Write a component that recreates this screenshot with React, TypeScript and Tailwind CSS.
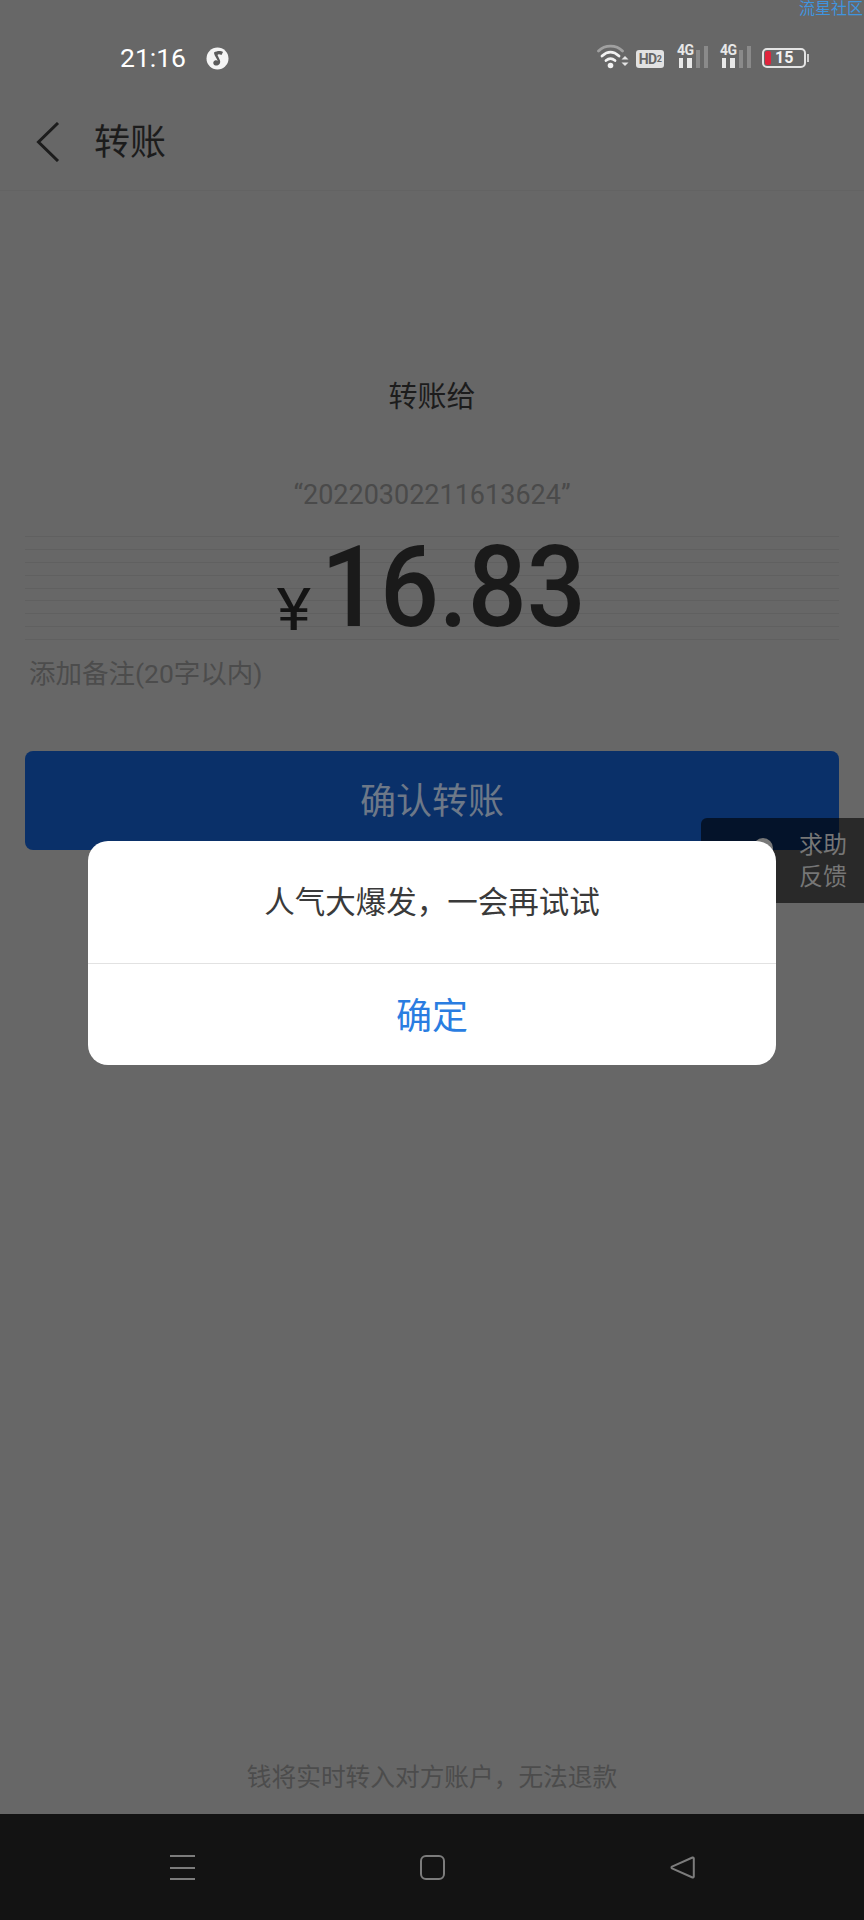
const RULE_KEYS = [0, 1, 2, 3, 4, 5, 6, 7, 8];

function WifiIcon() {
  return (
    <svg width="32" height="25" viewBox="0 0 32 25" fill="none" strokeLinecap="round">
      <path d="M1.5 7C8 0.5 19 0.5 25.5 7" stroke="#a0a0a0" strokeWidth="2.8" />
      <path d="M5 12C10.5 7 16.5 7 22 12" stroke="#f2f2f2" strokeWidth="2.8" />
      <path d="M9 16.5C12 14 15 14 18 16.5" stroke="#f2f2f2" strokeWidth="2.8" />
      <circle cx="13.5" cy="21.5" r="2.8" fill="#f2f2f2" />
      <path d="M24.5 15.5L28 12L31.5 15.5Z" fill="#e4e4e4" />
      <path d="M24.5 18.5L28 22L31.5 18.5Z" fill="#e4e4e4" />
    </svg>
  );
}

function CellIcon() {
  return (
    <div className="relative h-[24px] w-[31px]">
      <span className="absolute left-0 top-[-2px] text-[14px] font-bold leading-[16px] tracking-[-0.5px] text-[#e8e8e8]">4G</span>
      <div className="absolute bottom-0 left-[2px] h-[10px] w-[4px] bg-[#e8e8e8]" />
      <div className="absolute bottom-0 left-[10px] h-[10px] w-[5px] bg-[#e8e8e8]" />
      <div className="absolute bottom-0 left-[19px] h-[18px] w-[4px] bg-[#8a8a8a]" />
      <div className="absolute bottom-0 left-[27px] h-[22px] w-[4px] bg-[#8a8a8a]" />
    </div>
  );
}

function StatusBar() {
  return (
    <div className="flex h-[96px] shrink-0 items-start pt-[44px]">
      <span className="ml-[120px] text-[26.5px] leading-[28px] text-white">21:16</span>
      <svg className="ml-[20px] mt-[3px]" width="23" height="23" viewBox="0 0 23 23">
        <circle cx="11.5" cy="11.5" r="11" fill="#f4f4f4" />
        <path d="M8 5.5C11 3.5 15 3.5 17 5L15.5 8C13.5 7 12 7 11.5 8L14 13.5C15 17 12 19 9.5 18.5C7 18 6.5 15 8.5 13.8C9.8 13 11 13.2 11.8 13.8L8.8 8.5C8.2 7.3 8 6.3 8 5.5Z" fill="#5c5c5c" />
      </svg>
      <div className="ml-auto mr-[58px] flex items-start">
        <WifiIcon />
        <div className="ml-[7px] mt-[6px] flex h-[18px] w-[28px] items-center justify-center rounded-[3px] bg-[#e2e2e2] text-[14px] font-bold leading-none tracking-[-0.5px] text-[#666666]">
          HD<span className="text-[9px]">2</span>
        </div>
        <div className="ml-[13px]"><CellIcon /></div>
        <div className="ml-[12px]"><CellIcon /></div>
        <div className="relative ml-[11px] mt-[4px] flex h-[20px] w-[44px] items-center rounded-[5px] border-2 border-[#e4e4e4]">
          <div className="ml-[1px] h-[14px] w-[6px] rounded-[2px] bg-[#e0243c]" />
          <span className="ml-[4px] text-[16px] font-bold leading-none text-[#f2f2f2]">15</span>
          <div className="absolute right-[-5px] top-[4px] h-[8px] w-[2px] bg-[#cfcfcf]" />
        </div>
      </div>
    </div>
  );
}

function NavButtons() {
  return (
    <div className="flex h-[106px] shrink-0 items-start bg-[#131313] pt-[41px]">
      <div className="ml-[170px] flex h-[25px] w-[25px] flex-col justify-between">
        <div className="h-[2px] bg-[#7c7c7c]" />
        <div className="h-[2px] bg-[#7c7c7c]" />
        <div className="h-[2px] bg-[#7c7c7c]" />
      </div>
      <div className="ml-[225px] h-[25px] w-[25px] rounded-[6px] border-2 border-[#7c7c7c]" />
      <svg className="ml-[225px]" width="25" height="25" viewBox="0 0 25 25" fill="none">
        <path d="M22.5 2.5C23 2.3 23.8 2.6 23.8 3.4V21.6C23.8 22.4 23 22.7 22.5 22.5L2 13.3C1.3 12.9 1.3 12.1 2 11.7Z" stroke="#7c7c7c" strokeWidth="2" strokeLinejoin="round" />
      </svg>
    </div>
  );
}

export default function App() {
  return (
    <div className="relative flex h-[1920px] w-[864px] flex-col overflow-hidden bg-[#676767] font-['Roboto','Noto_Sans_CJK_SC',sans-serif]">
      <span className="absolute right-px top-px text-[16px] leading-[16px] text-[#4094de]">流星社区</span>

      <StatusBar />

      {/* Header */}
      <div className="flex h-[95px] shrink-0 items-start border-b border-[#636363] pt-[26px]">
        <svg className="ml-[36px]" width="24" height="40" viewBox="0 0 24 40" fill="none">
          <path d="M22 1L2.5 20L22 39" stroke="#1c1c1c" strokeWidth="3" />
        </svg>
        <span className="ml-[34px] text-[36px] leading-[42px] text-[#1c1c1c]">转账</span>
      </div>

      <div className="flex flex-1 flex-col px-[25px]">
        <p className="mt-[186px] text-center text-[29px] leading-[40px] text-[#1c1c1c]">转账给</p>
        <p className="mt-[59px] text-center text-[27px] leading-[38px] text-[#4a4a4a]">“20220302211613624”</p>

        {/* Amount */}
        <div className="relative mt-[22px] flex h-[104px] items-start justify-center pr-[7px]">
          <div className="absolute inset-x-0 top-0 flex h-full flex-col justify-between">
            {RULE_KEYS.map((k) => (
              <div key={k} className="h-px bg-[#606060]" />
            ))}
          </div>
          <span className="relative mr-[12px] mt-[41px] origin-bottom scale-x-[1.1] text-[60px] leading-[66px] text-[#141414]">¥</span>
          <span className="relative mt-[-14px] w-[258px] origin-left scale-x-[0.91] text-[114px] font-medium leading-[130px] text-[#1a1a1a]">16.83</span>
        </div>

        <p className="ml-[4px] mt-[16px] text-[26.5px] leading-[36px] text-[#4c4c4c]">添加备注(20字以内)</p>

        <div className="mt-[59px] flex h-[99px] items-center justify-center rounded-[8px] bg-[#0a3069] pt-[3px] text-[36px] text-[#6d7888]">
          确认转账
        </div>

        <p className="mt-auto pb-[18px] text-center text-[24.7px] leading-[36px] text-[#4c4c4c]">钱将实时转入对方账户，无法退款</p>
      </div>

      <NavButtons />

      {/* Feedback tab */}
      <div className="absolute left-[701px] top-[818px] flex h-[85px] w-[163px] items-center justify-end rounded-tl-[6px] bg-black/60 pr-[17px]">
        <div className="absolute left-[52px] top-[20px] h-[20px] w-[20px] rounded-full bg-[#787878]" />
        <p className="text-[24px] leading-[32px] text-[#767676]">求助<br />反馈</p>
      </div>

      {/* Alert dialog */}
      <div className="absolute left-[88px] top-[841px] flex h-[224px] w-[688px] flex-col rounded-[20px] bg-white">
        <div className="flex h-[123px] items-center justify-center border-b border-[#e2e2e2] pt-[2px] text-[30.5px] text-[#3a3a3a]">
          人气大爆发，一会再试试
        </div>
        <div className="flex flex-1 items-center justify-center pt-[4px] text-[36px] text-[#2a7de1]">确定</div>
      </div>
    </div>
  );
}
